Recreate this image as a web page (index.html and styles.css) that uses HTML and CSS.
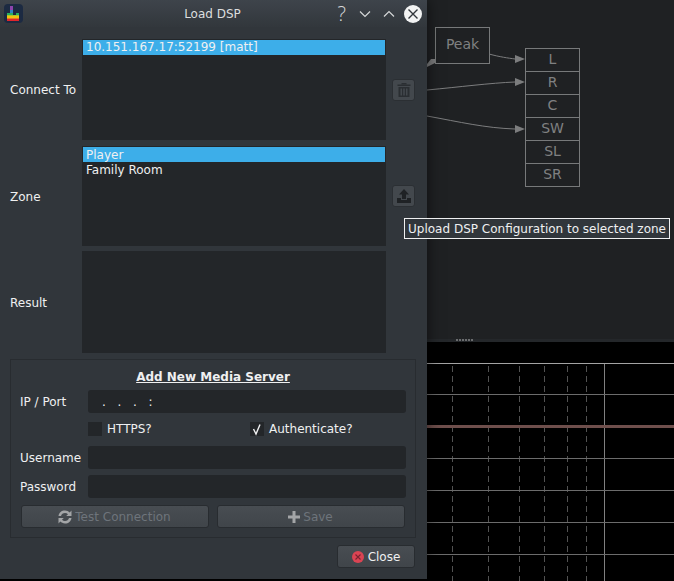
FILE: index.html
```html
<!DOCTYPE html>
<html lang="en">
<head>
  <meta charset="UTF-8" />
  <title>Load DSP</title>
  <link rel="stylesheet" href="styles.css">
</head>
<body>

  <!-- graph behind the dialog -->
  <div class="graph">
    <svg class="wires" width="674" height="339">
      <g fill="none" stroke="#7c7d7e" stroke-width="1">
        <path d="M489 54 C500 57 508 58 515 59" />
        <path d="M427 90 C460 87 490 83 515 82" />
        <path d="M427 116 C460 122 485 128 515 129" />
      </g>
      <g fill="#7c7d7e">
        <path d="M515 55 L525 59 L515 63 Z" />
        <path d="M515 78 L525 82 L515 86 Z" />
        <path d="M515 125 L525 129 L515 133 Z" />
        <path d="M427 64 L431 59 L435 59 L435 63 L427 67 Z" />
      </g>
    </svg>
    <div class="node peak">Peak</div>
    <div class="node channels">
      <div class="channel">L</div>
      <div class="channel">R</div>
      <div class="channel">C</div>
      <div class="channel">SW</div>
      <div class="channel">SL</div>
      <div class="channel">SR</div>
    </div>
  </div>
  <div class="splitter"><span class="grip"></span></div>

  <!-- chart behind the dialog -->
  <svg class="chart" width="674" height="239">
    <g stroke="#525252" stroke-width="1" stroke-dasharray="6 4" fill="none">
      <path d="M452.5 24V239" />
      <path d="M488.5 24V239" />
      <path d="M519.5 24V239" />
      <path d="M544.5 24V239" />
      <path d="M567.5 24V239" />
      <path d="M586.5 24V239" />
    </g>
    <path d="M604.5 21V239" stroke="#808080" stroke-width="1" />
    <g stroke="#6c6c6c" stroke-width="1">
      <path d="M0 21.5H674" stroke="#a4a4a4" />
      <path d="M0 52.5H674" />
      <path d="M0 116.5H674" />
      <path d="M0 148.5H674" />
      <path d="M0 180.5H674" />
      <path d="M0 212.5H674" />
    </g>
    <path d="M0 84.5H674" stroke="#6f4f4c" stroke-width="3" />
  </svg>

  <div class="dialog">
    <div class="titlebar">
      <svg class="app-icon" width="19" height="19" viewBox="0 0 19 19">
        <rect width="19" height="19" rx="4" fill="#1c2a42" />
        <rect x="6" y="2" width="3" height="4" fill="#8e44ad" />
        <rect x="6" y="6" width="3" height="3" fill="#2e86c1" />
        <rect x="3" y="9" width="6" height="2" fill="#27ae60" />
        <rect x="12" y="9" width="3" height="2" fill="#27ae60" />
        <rect x="3" y="11" width="12" height="1" fill="#a8c62c" />
        <rect x="3" y="12" width="12" height="2" fill="#f1c40f" />
        <rect x="3" y="14" width="12" height="1" fill="#e67e22" />
        <rect x="3" y="15" width="12" height="2" fill="#e0262b" />
      </svg>
      <div class="title">Load DSP</div>
      <div class="window-buttons">
        <span class="help">?</span>
        <svg width="14" height="14" viewBox="0 0 14 14"><path d="M2 4.5 L7 9.5 L12 4.5" fill="none" stroke="#d5d7d8" stroke-width="1.2" /></svg>
        <svg width="14" height="14" viewBox="0 0 14 14"><path d="M2 9.5 L7 4.5 L12 9.5" fill="none" stroke="#d5d7d8" stroke-width="1.2" /></svg>
        <svg class="close-circle" width="18" height="18" viewBox="0 0 18 18"><circle cx="9" cy="9" r="9" fill="#f2f3f3" /><path d="M4.5 4.5 L13.5 13.5 M13.5 4.5 L4.5 13.5" stroke="#31363b" stroke-width="1.4" /></svg>
      </div>
    </div>

    <div class="lists">
      <label class="row-label">Connect To</label>
      <ul class="list list-connect">
        <li class="selected">10.151.167.17:52199 [matt]</li>
      </ul>
      <button class="icon-button" type="button" disabled>
        <svg width="14" height="14" viewBox="0 0 14 14" fill="#2a2e32">
          <rect x="0.5" y="1.5" width="13" height="1.5" />
          <rect x="4.5" y="0" width="5" height="1.5" />
          <path d="M1.5 4H12.5V14H1.5ZM3.5 5.5V12.5H5V5.5ZM6.2 5.5V12.5H7.8V5.5ZM9 5.5V12.5H10.5V5.5Z" fill-rule="evenodd" />
        </svg>
      </button>

      <label class="row-label label-zone">Zone</label>
      <ul class="list list-zone">
        <li class="selected">Player</li>
        <li>Family Room</li>
      </ul>
      <button class="icon-button" type="button" disabled>
        <svg width="16" height="16" viewBox="0 0 16 16" fill="#1f2225">
          <path d="M8 1 L13 6.5 H10 V11 H6 V6.5 H3 Z" />
          <path d="M1 10 H5 V12 H11 V10 H15 V15 H1 Z" />
        </svg>
      </button>

      <label class="row-label label-result">Result</label>
      <ul class="list list-result"></ul>
      <span></span>
    </div>

    <div class="group">
      <div class="group-title">Add New Media Server</div>
      <div class="group-form">
        <label>IP / Port</label>
        <div class="field ip-mask"><span>.</span><span>.</span><span>.</span><span>:</span></div>

        <span></span>
        <div class="checks">
          <div class="check"><span class="box"></span>HTTPS?</div>
          <div class="check"><span class="box">
            <svg width="14" height="14" viewBox="0 0 14 14"><path d="M3.5 7 L6 12 L10 2.5" fill="none" stroke="#eff0f1" stroke-width="1.4" /></svg>
          </span>Authenticate?</div>
        </div>

        <label>Username</label>
        <div class="field"></div>

        <label>Password</label>
        <div class="field"></div>
      </div>
      <div class="group-buttons">
        <button class="push" type="button" disabled>
          <svg width="16" height="16" viewBox="0 0 16 16" fill="#a3a5a7">
            <path d="M1.5 7 C2 3.5 4.5 1.5 8 1.5 C10 1.5 11.5 2.3 12.7 3.4 L14.5 1.6 V7 H9.2 L11 5.2 C10.2 4.4 9.2 4 8 4 C6 4 4.5 5.2 4 7 Z" />
            <path d="M14.5 9 C14 12.5 11.5 14.5 8 14.5 C6 14.5 4.5 13.7 3.3 12.6 L1.5 14.4 V9 H6.8 L5 10.8 C5.8 11.6 6.8 12 8 12 C10 12 11.5 10.8 12 9 Z" />
          </svg>
          Test Connection
        </button>
        <button class="push" type="button" disabled>
          <svg width="14" height="14" viewBox="0 0 14 14" fill="#a3a5a7">
            <path d="M5.5 1H8.5V5.5H13V8.5H8.5V13H5.5V8.5H1V5.5H5.5Z" />
          </svg>
          Save
        </button>
      </div>
    </div>

    <div class="footer">
      <button class="push close" type="button">
        <svg width="12" height="12" viewBox="0 0 12 12"><circle cx="6" cy="6" r="6" fill="#da4453" /><path d="M3.5 3.5 L8.5 8.5 M8.5 3.5 L3.5 8.5" stroke="#7a2230" stroke-width="1.1" /></svg>
        Close
      </button>
    </div>
  </div>

  <div class="tooltip">Upload DSP Configuration to selected zone</div>

</body>
</html>
```

FILE: styles.css
```css
* {
  box-sizing: border-box;
}
html, body {
  margin: 0;
  height: 581px;
  overflow: hidden;
}
body {
  position: relative;
  width: 674px;
  background: #000;
  font-family: "DejaVu Sans", sans-serif;
  font-size: 12px;
  color: #eff0f1;
}
button {
  font-family: inherit;
  font-size: 12px;
}

/* background windows */
.graph {
  position: relative;
  height: 339px;
  background: #1f2123;
}
.wires {
  position: absolute;
  left: 0;
  top: 0;
}
.node {
  position: absolute;
  color: #7f8081;
  border: 1px solid #77797a;
  background: #1f2123;
  font-size: 14px;
}
.peak {
  left: 435px;
  top: 27px;
  width: 55px;
  height: 37px;
  padding-bottom: 3px;
  display: flex;
  align-items: center;
  justify-content: center;
}
.channels {
  left: 525px;
  top: 48px;
  width: 55px;
  height: 139px;
  display: flex;
  flex-direction: column;
}
.channel {
  flex: 1;
  padding-bottom: 2px;
  display: flex;
  align-items: center;
  justify-content: center;
  border-bottom: 1px solid #77797a;
}
.channel:last-child {
  border-bottom: 0;
}
.splitter {
  height: 3px;
  background: #24272a;
  padding-left: 456px;
}
.grip {
  display: block;
  width: 17px;
  height: 2px;
  background: repeating-linear-gradient(90deg, #6a6c6e 0 2px, transparent 2px 3px);
}
.chart {
  display: block;
}

/* dialog */
.dialog {
  position: absolute;
  left: 0;
  top: 0;
  width: 427px;
  height: 579px;
  background: #31363b;
  box-shadow: 0 0 14px rgba(0,0,0,0.6);
}
.titlebar {
  position: relative;
  height: 27px;
  display: flex;
  align-items: center;
  padding: 0 5px 0 4px;
  background: linear-gradient(#3e444b, #32373c);
}
.app-icon {
  flex: none;
}
.title {
  position: absolute;
  left: 0;
  width: 425px;
  text-align: center;
  color: #dcdedf;
}
.window-buttons {
  position: relative;
  margin-left: auto;
  display: flex;
  align-items: center;
  gap: 10px;
}
.help {
  margin-right: 2px;
  font-family: "Open Sans", sans-serif;
  font-size: 20px;
  font-weight: 300;
  color: #d5d7d8;
}
.close-circle {
  margin-left: -2px;
}

.lists {
  display: grid;
  grid-template-columns: 82px 304px 1fr;
  grid-template-rows: 101px 101px 102px;
  row-gap: 5px;
  padding-top: 12px;
  align-items: center;
}
.row-label {
  padding-left: 10px;
}
.label-zone,
.label-result {
  padding-top: 2px;
}
.list {
  margin: 0;
  padding: 1px;
  list-style: none;
  height: 100%;
  background: #232629;
  border: 0;
}
.list-zone {
  height: 100px;
  align-self: end;
}
.list li {
  height: 15px;
  line-height: 15px;
  padding-left: 3px;
}
.list-zone li {
  line-height: 17px;
}
.list li.selected {
  background: #3daee9;
}
.icon-button {
  width: 23px;
  height: 22px;
  margin-left: 6px;
  padding: 0;
  display: flex;
  align-items: center;
  justify-content: center;
  background: #43484d;
  border: 1px solid #2b2f33;
  border-radius: 3px;
}

.group {
  width: 406px;
  height: 179px;
  margin: 6px 0 0 10px;
  padding: 9px 9px 0;
  border: 1px solid #282c30;
}
.group-title {
  height: 15px;
  line-height: 17px;
  text-align: center;
  font-weight: bold;
  text-decoration: underline;
}
.group-form {
  display: grid;
  grid-template-columns: 68px minmax(0, 1fr);
  grid-template-rows: 23px 21px 23px 23px;
  row-gap: 6px;
  align-items: center;
  margin-top: 6px;
}
.group-form .checks {
  align-self: start;
  padding-top: 3px;
}
.field {
  height: 23px;
  background: #232629;
  border-radius: 3px;
}
.ip-mask {
  display: flex;
  align-items: center;
  gap: 11.7px;
  padding-left: 14px;
}
.checks {
  display: flex;
}
.check {
  flex: none;
  display: flex;
  align-items: center;
  gap: 5px;
  width: 162px;
  height: 14px;
  white-space: nowrap;
}
.box {
  width: 14px;
  height: 14px;
  background: #232629;
  display: block;
}
.box svg {
  display: block;
}
.group-buttons {
  display: flex;
  gap: 8px;
  padding: 0 1px;
  margin-top: 7px;
}
.push {
  height: 23px;
  display: flex;
  align-items: center;
  justify-content: center;
  gap: 2px;
  padding: 0 2px 0 0;
  color: #eff0f1;
  background: linear-gradient(#484d52, #40454a);
  border: 1px solid #282c30;
  border-radius: 3px;
}
.group-buttons .push {
  width: 188px;
  color: #6e747b;
}
.footer {
  display: flex;
  justify-content: flex-end;
  padding: 7px 12px 0 0;
}
.close {
  width: 78px;
  gap: 4px;
  padding: 0;
}

.tooltip {
  position: absolute;
  left: 404px;
  top: 218px;
  width: 266px;
  height: 21px;
  line-height: 20px;
  text-align: center;
  background: #31363b;
  border: 1px solid #eff0f1;
  white-space: nowrap;
}
```
